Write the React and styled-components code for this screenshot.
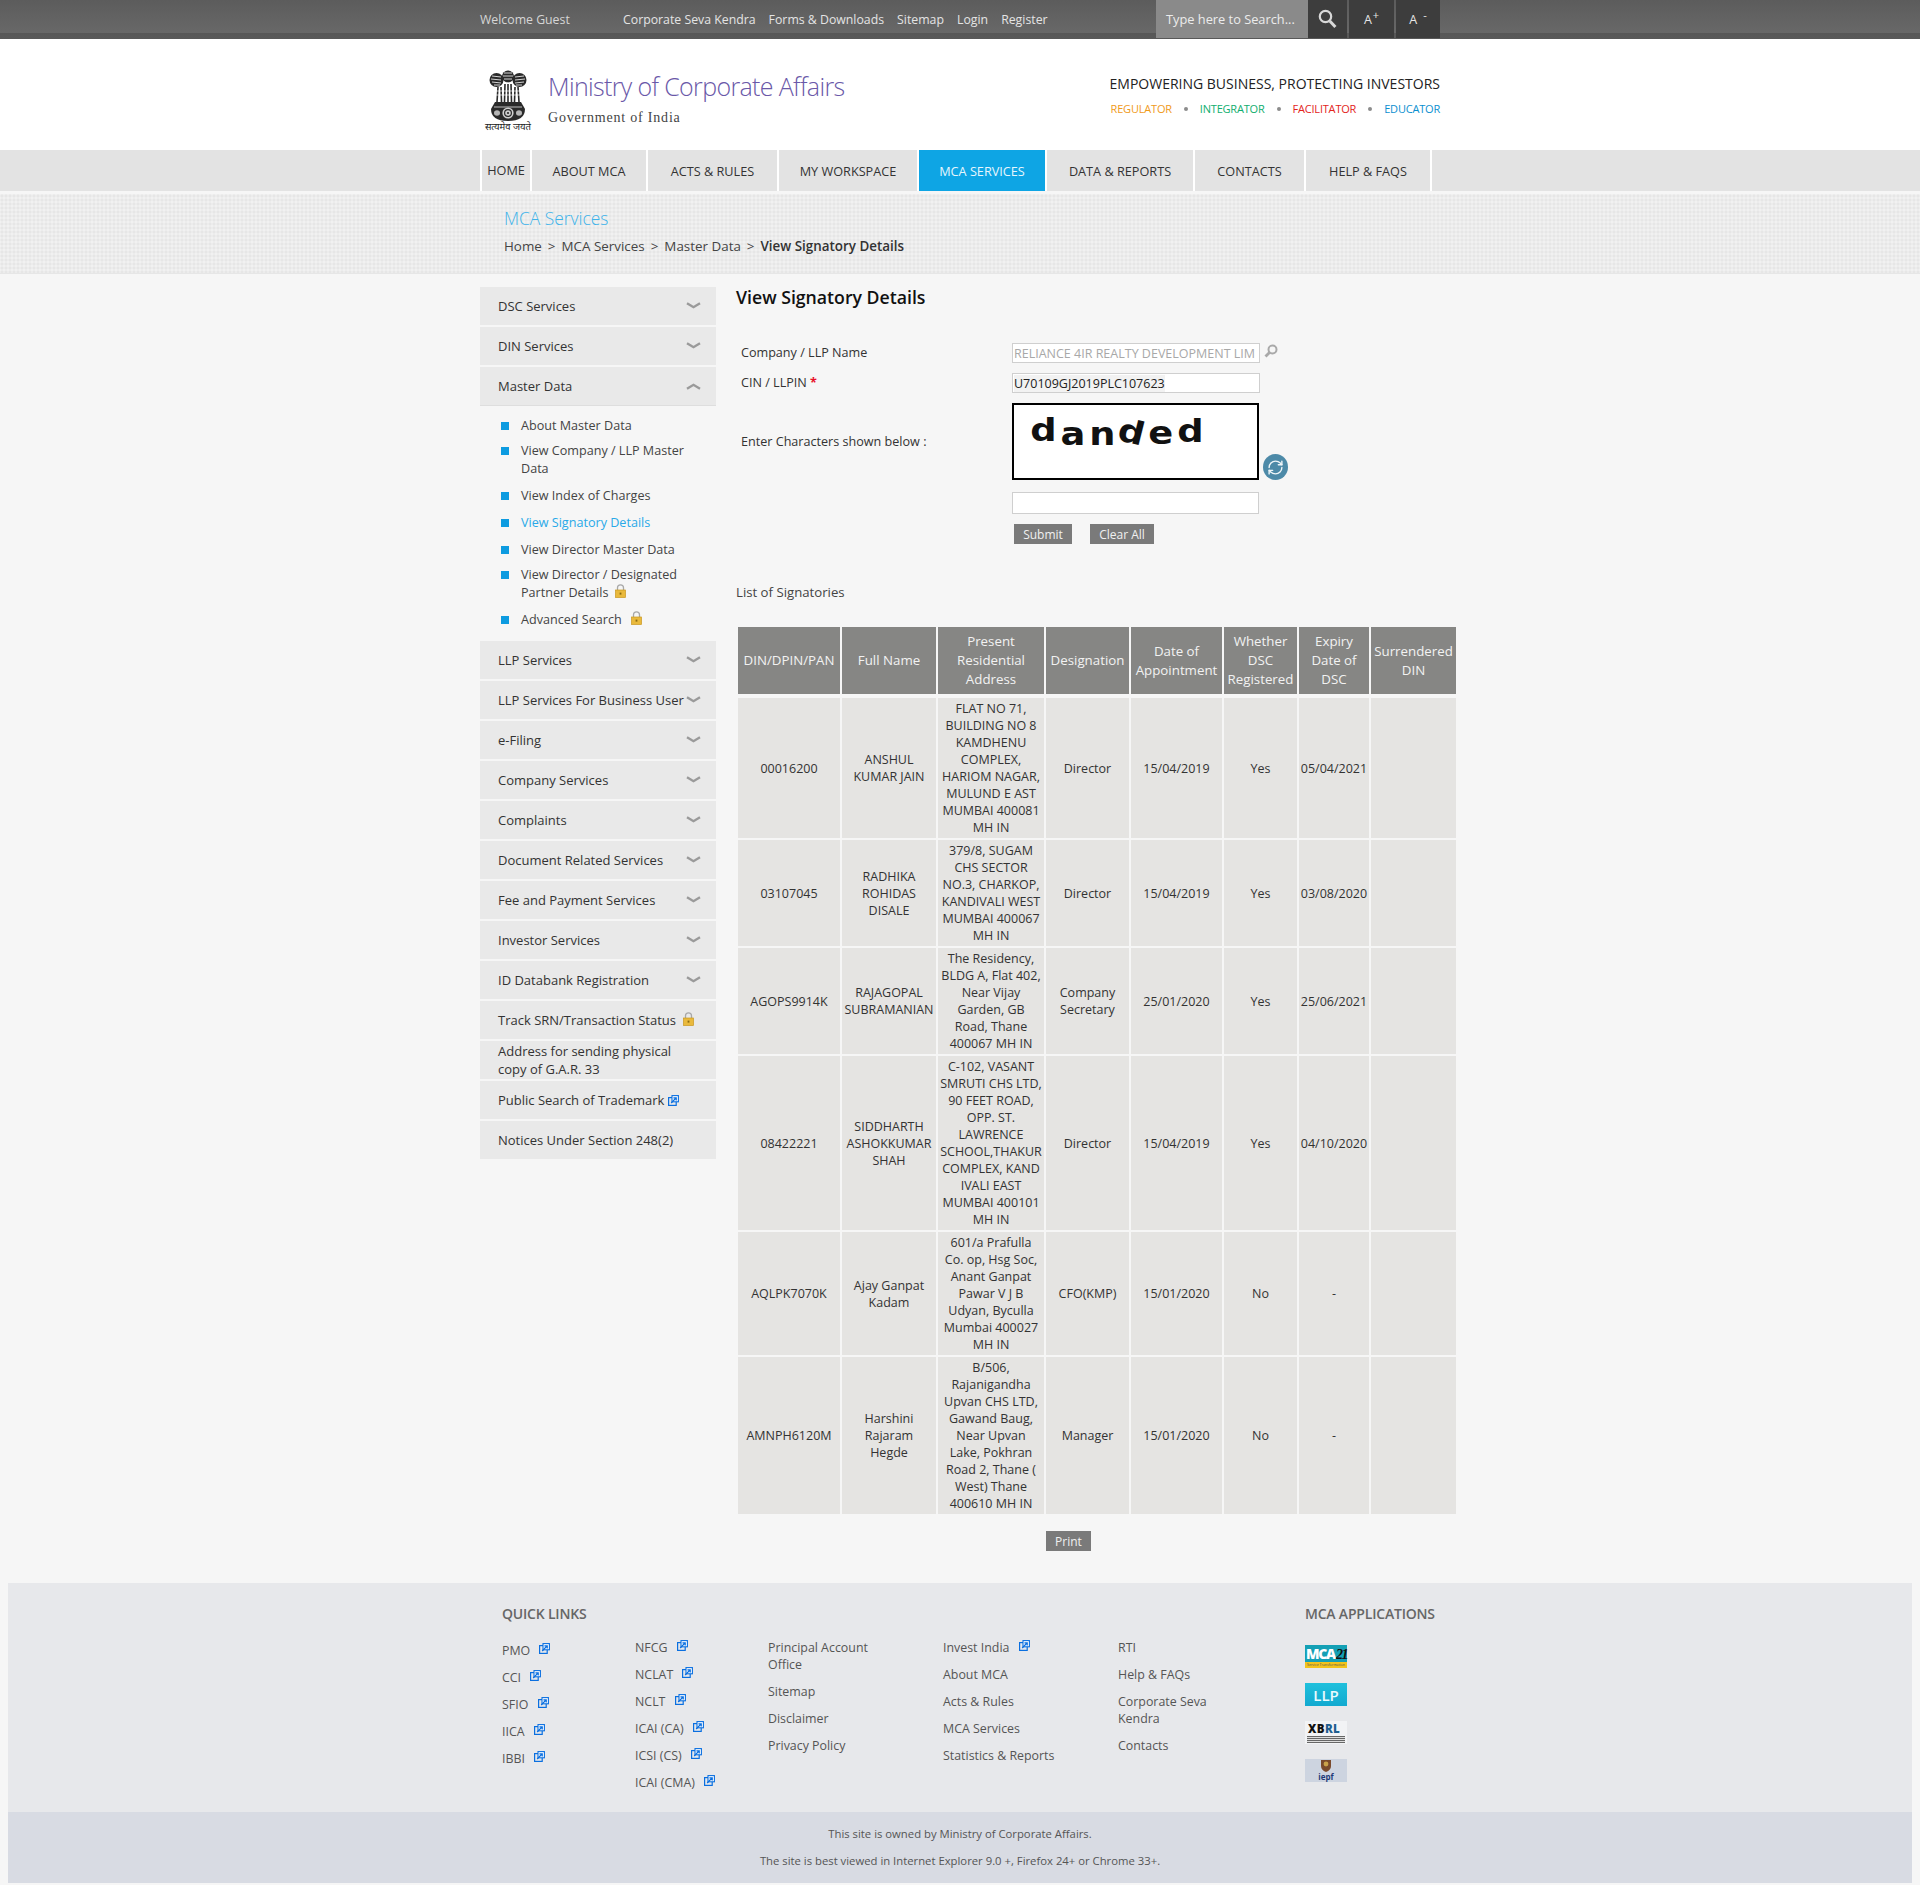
import React from "react";
import styled, { createGlobalStyle } from "styled-components";
import { RefreshCw } from "lucide-react";

const FONT = `"Open Sans", "Noto Sans", sans-serif`;

const GlobalStyle = createGlobalStyle`
  html, body {
    margin: 0;
    padding: 0;
    background: #f6f6f6;
    font-family: ${FONT};
    color: #333;
  }
  * { box-sizing: border-box; }
  ul { list-style: none; margin: 0; padding: 0; }
`;

const SIDE_TOP = ["DSC Services", "DIN Services"];
const SIDE_BOTTOM = [
  "LLP Services",
  "LLP Services For Business User",
  "e-Filing",
  "Company Services",
  "Complaints",
  "Document Related Services",
  "Fee and Payment Services",
  "Investor Services",
  "ID Databank Registration"
];
const NAV = [
  ["HOME", 48],
  ["ABOUT MCA", 114],
  ["ACTS & RULES", 129],
  ["MY WORKSPACE", 138],
  ["MCA SERVICES", 126],
  ["DATA & REPORTS", 146],
  ["CONTACTS", 109],
  ["HELP & FAQS", 124]
];
const HEADERS = [
  "DIN/DPIN/PAN",
  "Full Name",
  "Present Residential Address",
  "Designation",
  "Date of Appointment",
  "Whether DSC Registered",
  "Expiry Date of DSC",
  "Surrendered DIN"
];
const COLS = [102, 94, 106, 83, 91, 73, 70, 85];
const ROWS = [
  {
    din: "00016200",
    name: ["ANSHUL", "KUMAR JAIN"],
    address: ["FLAT NO 71,", "BUILDING NO 8", "KAMDHENU", "COMPLEX,", "HARIOM NAGAR,", "MULUND E AST", "MUMBAI 400081", "MH IN"],
    role: ["Director"],
    date: "15/04/2019",
    dsc: "Yes",
    expiry: "05/04/2021"
  },
  {
    din: "03107045",
    name: ["RADHIKA", "ROHIDAS", "DISALE"],
    address: ["379/8, SUGAM", "CHS SECTOR", "NO.3, CHARKOP,", "KANDIVALI WEST", "MUMBAI 400067", "MH IN"],
    role: ["Director"],
    date: "15/04/2019",
    dsc: "Yes",
    expiry: "03/08/2020"
  },
  {
    din: "AGOPS9914K",
    name: ["RAJAGOPAL", "SUBRAMANIAN"],
    address: ["The Residency,", "BLDG A, Flat 402,", "Near Vijay", "Garden, GB", "Road, Thane", "400067 MH IN"],
    role: ["Company", "Secretary"],
    date: "25/01/2020",
    dsc: "Yes",
    expiry: "25/06/2021"
  },
  {
    din: "08422221",
    name: ["SIDDHARTH", "ASHOKKUMAR", "SHAH"],
    address: ["C-102, VASANT", "SMRUTI CHS LTD,", "90 FEET ROAD,", "OPP. ST.", "LAWRENCE", "SCHOOL,THAKUR", "COMPLEX, KAND", "IVALI EAST", "MUMBAI 400101", "MH IN"],
    role: ["Director"],
    date: "15/04/2019",
    dsc: "Yes",
    expiry: "04/10/2020"
  },
  {
    din: "AQLPK7070K",
    name: ["Ajay Ganpat", "Kadam"],
    address: ["601/a Prafulla", "Co. op, Hsg Soc,", "Anant Ganpat", "Pawar V J B", "Udyan, Byculla", "Mumbai 400027", "MH IN"],
    role: ["CFO(KMP)"],
    date: "15/01/2020",
    dsc: "No",
    expiry: "-"
  },
  {
    din: "AMNPH6120M",
    name: ["Harshini", "Rajaram", "Hegde"],
    address: ["B/506,", "Rajanigandha", "Upvan CHS LTD,", "Gawand Baug,", "Near Upvan", "Lake, Pokhran", "Road 2, Thane (", "West) Thane", "400610 MH IN"],
    role: ["Manager"],
    date: "15/01/2020",
    dsc: "No",
    expiry: "-"
  }
];

const Lines = ({ items }) =>
  items.map((line, i) => (
    <React.Fragment key={i}>
      {i > 0 && <br />}
      {line}
    </React.Fragment>
  ));

const Chevron = ({ up }) => (
  <ChevronSvg viewBox="0 0 15 8" $up={up}>
    <path d="M1 1.2 L7.5 5.2 L14 1.2" fill="none" stroke="#9a9a9a" strokeWidth="2.4" />
  </ChevronSvg>
);

const Lock = () => (
  <IconSvg width="11" height="14" viewBox="0 0 11 14">
    <path d="M2.5 6.5 V3.8 a3 3 0 0 1 6 0 V6.5" fill="none" stroke="#a8a8a8" strokeWidth="1.3" />
    <rect x="0.5" y="6" width="10" height="7.5" fill="#e9b93c" stroke="#c9981f" strokeWidth="0.7" />
    <rect x="4.6" y="8.6" width="1.8" height="2" fill="#8a6a10" />
  </IconSvg>
);

const External = () => (
  <IconSvg width="11" height="11" viewBox="0 0 11 11">
    <rect x="0.6" y="2.6" width="7.6" height="7.8" fill="none" stroke="#0a6fe0" strokeWidth="1.2" />
    <rect x="4" y="0.6" width="6.4" height="6.2" fill="#fff" stroke="#0a6fe0" strokeWidth="1.1" />
    <path d="M3.2 8 L7.6 3.4 M5.4 2.8 H8.2 V5.6" fill="none" stroke="#0a6fe0" strokeWidth="1.3" />
  </IconSvg>
);

// rough drawing of the state emblem, lacy on purpose
const Emblem = () => (
  <svg width="38" height="52" viewBox="0 0 38 52">
    <ellipse cx="19" cy="6.5" rx="6" ry="6" fill="#2a2a2a" />
    <ellipse cx="7.5" cy="10" rx="7" ry="7" fill="#2a2a2a" />
    <ellipse cx="30.5" cy="10" rx="7" ry="7" fill="#2a2a2a" />
    <path
      d="M15 3 l8 0 M14 6 l10 0 M15 9 l8 0 M3 6 l9 1 M2 9 l10 1 M3 12 l9 1 M5 15 l6 0 M26 7 l9 -1 M26 10 l10 -1 M26 13 l9 -1 M27 15 l6 0"
      stroke="#fff"
      strokeWidth="0.8"
    />
    <path d="M15 12 v4 M19 12 v4 M23 12 v4" stroke="#fff" strokeWidth="0.7" />
    <path d="M9 17 L8 32 M12 17 L12.5 32 M16 14 L15.5 32 M19 14 V32 M22 14 L22.5 32 M26 17 L25.5 32 M29 17 L30 32" stroke="#2a2a2a" strokeWidth="1.6" />
    <path d="M7 21 h24 M7 25 h24" stroke="#fff" strokeWidth="0.7" />
    <path d="M6 32 h26 l4 7 q0 12 -17 12 q-17 0 -17 -12 z" fill="#2a2a2a" />
    <path d="M5 37 h28" stroke="#fff" strokeWidth="0.7" />
    <circle cx="19" cy="43" r="5.6" fill="#cfcfcf" />
    <circle cx="19" cy="43" r="3.4" fill="none" stroke="#2a2a2a" strokeWidth="1.2" />
    <circle cx="19" cy="43" r="1.1" fill="#2a2a2a" />
    <ellipse cx="8" cy="43" rx="3" ry="2.8" fill="#b5b5b5" />
    <ellipse cx="30" cy="43" rx="3" ry="2.8" fill="#b5b5b5" />
  </svg>
);

const App = () => (
  <>
    <GlobalStyle />
    <TopBar>
      <TopInner>
        <Welcome>Welcome Guest</Welcome>
        <TopLinks>
          <span>Corporate Seva Kendra</span>
          <span>Forms &amp; Downloads</span>
          <span>Sitemap</span>
          <span>Login</span>
          <span>Register</span>
        </TopLinks>
        <SearchBox>Type here to Search...</SearchBox>
        <DarkButton $w={39} $first>
          <svg width="19" height="20" viewBox="0 0 19 20">
            <circle cx="7.5" cy="7.5" r="5.7" fill="none" stroke="#d8d8d8" strokeWidth="2.2" />
            <path d="M11.8 12 L17.4 18" stroke="#d8d8d8" strokeWidth="3" />
          </svg>
        </DarkButton>
        <DarkButton $w={45}>
          A<sup>+</sup>
        </DarkButton>
        <DarkButton $w={44} $gap={6}>
          A<sup>-</sup>
        </DarkButton>
      </TopInner>
    </TopBar>

    <HeaderBand>
      <Header>
        <Brand>
          <EmblemWrap>
            <Emblem />
            <Motto>सत्यमेव जयते</Motto>
          </EmblemWrap>
          <div>
            <BrandTitle>Ministry of Corporate Affairs</BrandTitle>
            <BrandSub>Government of India</BrandSub>
          </div>
        </Brand>
        <Tagline>
          <TagHead>EMPOWERING BUSINESS, PROTECTING INVESTORS</TagHead>
          <TagRow>
            <TagWord $c="#f09a1a">REGULATOR</TagWord>
            <TagDot />
            <TagWord $c="#0fae6e">INTEGRATOR</TagWord>
            <TagDot />
            <TagWord $c="#e3241b">FACILITATOR</TagWord>
            <TagDot />
            <TagWord $c="#0b8fd0">EDUCATOR</TagWord>
          </TagRow>
        </Tagline>
      </Header>
    </HeaderBand>

    <NavBand>
      <NavInner>
        {NAV.map(([label, w]) => (
          <NavItem key={label} $w={w} $active={label === "MCA SERVICES"} $home={label === "HOME"}>
            {label}
          </NavItem>
        ))}
      </NavInner>
    </NavBand>

    <Banner>
      <BannerInner>
        <BannerTitle>MCA Services</BannerTitle>
        <Crumbs>
          Home<CrumbSep>&gt;</CrumbSep>MCA Services<CrumbSep>&gt;</CrumbSep>Master Data<CrumbSep>&gt;</CrumbSep>
          <b>View Signatory Details</b>
        </Crumbs>
      </BannerInner>
    </Banner>

    <Content>
      <Sidebar>
        {SIDE_TOP.map(s => (
          <SideItem key={s}>
            {s}
            <Chevron />
          </SideItem>
        ))}
        <SideItem $open>
          Master Data
          <Chevron up />
        </SideItem>
        <SubMenu>
          <SubItem>About Master Data</SubItem>
          <SubItem $pull>View Company / LLP Master Data</SubItem>
          <SubItem>View Index of Charges</SubItem>
          <SubItem $active>View Signatory Details</SubItem>
          <SubItem>View Director Master Data</SubItem>
          <SubItem $pull>
            View Director / Designated Partner Details&nbsp; <Lock />
          </SubItem>
          <SubItem>
            Advanced Search &nbsp;&nbsp;
            <Lock />
          </SubItem>
        </SubMenu>
        {SIDE_BOTTOM.map(s => (
          <SideItem key={s}>
            {s}
            <Chevron />
          </SideItem>
        ))}
        <SideItem>
          <span>
            Track SRN/Transaction Status&nbsp; <Lock />
          </span>
        </SideItem>
        <SideItem $tight>Address for sending physical copy of G.A.R. 33</SideItem>
        <SideItem>
          <span>
            Public Search of Trademark <External />
          </span>
        </SideItem>
        <SideItem>Notices Under Section 248(2)</SideItem>
      </Sidebar>

      <Main>
        <PageTitle>View Signatory Details</PageTitle>
        <FormRow $h={20} $top={35}>
          <FormLabel>Company / LLP Name</FormLabel>
          <TextBox $muted>RELIANCE 4IR REALTY DEVELOPMENT LIM</TextBox>
          <LookupIcon viewBox="0 0 14 14">
            <circle cx="8.5" cy="5.5" r="4" fill="none" stroke="#a9a9a9" strokeWidth="2" />
            <path d="M5.5 8.5 L1.5 12.5" stroke="#a9a9a9" strokeWidth="2.8" />
          </LookupIcon>
        </FormRow>
        <FormRow $h={20} $top={10}>
          <FormLabel>
            CIN / LLPIN <Required>*</Required>
          </FormLabel>
          <TextBox>
            <Filled>U70109GJ2019PLC107623</Filled>
          </TextBox>
        </FormRow>
        <FormRow $h={78} $top={9}>
          <FormLabel $shift={0}>Enter Characters shown below :</FormLabel>
          <Captcha>
            <CaptchaLetter>d</CaptchaLetter>
            <CaptchaLetter $y={4}>a</CaptchaLetter>
            <CaptchaLetter $y={4}>n</CaptchaLetter>
            <CaptchaLetter $y={2} $r={14}>d</CaptchaLetter>
            <CaptchaLetter $y={3}>e</CaptchaLetter>
            <CaptchaLetter $y={1}>d</CaptchaLetter>
          </Captcha>
          <RefreshBadge>
            <RefreshCw size={17} color="#eef5f8" strokeWidth={2} />
          </RefreshBadge>
        </FormRow>
        <FormRow $h={22} $top={12}>
          <FormLabel />
          <TextBox $w={247} />
        </FormRow>
        <Buttons>
          <GreyButton $w={58}>Submit</GreyButton>
          <GreyButton $w={64}>Clear All</GreyButton>
        </Buttons>
        <ListTitle>List of Signatories</ListTitle>
        <Table>
          <colgroup>
            {COLS.map((w, i) => (
              <col key={i} width={w} />
            ))}
          </colgroup>
          <thead>
            <tr>
              {HEADERS.map(h => (
                <HeadCell key={h}>{h}</HeadCell>
              ))}
            </tr>
          </thead>
          <tbody>
            {ROWS.map(r => (
              <tr key={r.din}>
                <Cell>{r.din}</Cell>
                <Cell>
                  <Lines items={r.name} />
                </Cell>
                <Cell>
                  <Lines items={r.address} />
                </Cell>
                <Cell>
                  <Lines items={r.role} />
                </Cell>
                <Cell>{r.date}</Cell>
                <Cell>{r.dsc}</Cell>
                <Cell>{r.expiry}</Cell>
                <Cell />
              </tr>
            ))}
          </tbody>
        </Table>
        <PrintRow>
          <GreyButton $w={45}>Print</GreyButton>
        </PrintRow>
      </Main>
    </Content>

    <FooterWrap>
      <FooterTop>
        <QuickLinks>
          <FooterHead>QUICK LINKS</FooterHead>
          <FooterCols>
            <FooterCol $w={133} $top={3}>
              <FootLink>PMO <External /></FootLink>
              <FootLink>CCI <External /></FootLink>
              <FootLink>SFIO <External /></FootLink>
              <FootLink>IICA <External /></FootLink>
              <FootLink>IBBI <External /></FootLink>
            </FooterCol>
            <FooterCol $w={133}>
              <FootLink>NFCG <External /></FootLink>
              <FootLink>NCLAT <External /></FootLink>
              <FootLink>NCLT <External /></FootLink>
              <FootLink>ICAI (CA) <External /></FootLink>
              <FootLink>ICSI (CS) <External /></FootLink>
              <FootLink>ICAI (CMA) <External /></FootLink>
            </FooterCol>
            <FooterCol $w={175} $wrap={112}>
              <FootLink>Principal Account Office</FootLink>
              <FootLink>Sitemap</FootLink>
              <FootLink>Disclaimer</FootLink>
              <FootLink>Privacy Policy</FootLink>
            </FooterCol>
            <FooterCol $w={175}>
              <FootLink>Invest India <External /></FootLink>
              <FootLink>About MCA</FootLink>
              <FootLink>Acts &amp; Rules</FootLink>
              <FootLink>MCA Services</FootLink>
              <FootLink>Statistics &amp; Reports</FootLink>
            </FooterCol>
            <FooterCol $w={187} $wrap={110}>
              <FootLink>RTI</FootLink>
              <FootLink>Help &amp; FAQs</FootLink>
              <FootLink>Corporate Seva Kendra</FootLink>
              <FootLink>Contacts</FootLink>
            </FooterCol>
          </FooterCols>
        </QuickLinks>
        <Applications>
          <FooterHead>MCA APPLICATIONS</FooterHead>
          <AppLogos>
            <LogoMca>
              <McaWord>
                MCA<i>21</i>
              </McaWord>
              <McaStrip>Service Transformation</McaStrip>
            </LogoMca>
            <LogoLlp>LLP</LogoLlp>
            <LogoXbrl>
              <XbrlWord>
                XB<em>RL</em>
              </XbrlWord>
              <XbrlStripes />
            </LogoXbrl>
            <LogoIepf>
              <svg width="12" height="13" viewBox="0 0 12 13">
                <path d="M1 1 h10 v6 q0 4 -5 6 q-5 -2 -5 -6 z" fill="#7a4a2c" />
                <circle cx="6" cy="5" r="2.4" fill="#c9a24a" />
              </svg>
              <span>iepf</span>
            </LogoIepf>
          </AppLogos>
        </Applications>
      </FooterTop>
      <FooterBottom>
        <p>This site is owned by Ministry of Corporate Affairs.</p>
        <p>The site is best viewed in Internet Explorer 9.0 +, Firefox 24+ or Chrome 33+.</p>
      </FooterBottom>
    </FooterWrap>
  </>
);

const TopBar = styled.div`
  height: 39px;
  background: linear-gradient(#5c5c5c, #686868 85%, #575757 85%, #595959);
`;

const TopInner = styled.div`
  width: 960px;
  margin: 0 auto;
  height: 38px;
  display: flex;
  align-items: center;
  color: #e4e4e4;
  font-size: 12.3px;
`;

const Welcome = styled.span`
  width: 143px;
  color: #d6d6d6;
`;

const TopLinks = styled.div`
  display: flex;
  gap: 13px;
  flex: 1;
`;

const SearchBox = styled.div`
  width: 152px;
  height: 38px;
  padding: 0 0 0 10px;
  display: flex;
  align-items: center;
  background: #8a8a8a;
  color: #ececec;
  font-size: 12.8px;
  white-space: nowrap;
`;

const DarkButton = styled.div`
  width: ${p => p.$w}px;
  height: 38px;
  margin-left: ${p => (p.$first ? 0 : 2)}px;
  display: flex;
  align-items: center;
  justify-content: center;
  background: #3d3d3d;
  color: #e6e6e6;
  font-size: 12.5px;
  sup {
    font-size: 11px;
    line-height: 1;
    margin-bottom: 9px;
    margin-left: ${p => p.$gap || 1}px;
  }
`;

const HeaderBand = styled.div`
  background: #fff;
`;

const Header = styled.div`
  width: 960px;
  height: 111px;
  margin: 0 auto;
  display: flex;
  justify-content: space-between;
`;

const Brand = styled.div`
  display: flex;
  padding: 31px 0 0 4px;
`;

const EmblemWrap = styled.div`
  width: 48px;
  margin-right: 16px;
  display: flex;
  flex-direction: column;
  align-items: center;
`;

const Motto = styled.span`
  font-family: "Noto Sans", "DejaVu Sans", sans-serif;
  font-size: 9.5px;
  line-height: 10px;
  white-space: nowrap;
  color: #222;
`;

const BrandTitle = styled.div`
  color: #6a58a8;
  font-size: 25px;
  font-weight: 300;
  line-height: 32px;
  letter-spacing: -0.65px;
  white-space: nowrap;
`;

const BrandSub = styled.div`
  margin-top: 7px;
  font-family: "Liberation Serif", serif;
  font-size: 14px;
  font-weight: 400;
  line-height: 18px;
  letter-spacing: 0.8px;
  color: #444;
`;

const Tagline = styled.div`
  padding-top: 37px;
  text-align: right;
`;

const TagHead = styled.div`
  font-size: 14px;
  line-height: 16px;
  color: #222;
`;

const TagRow = styled.div`
  margin-top: 10px;
  display: flex;
  align-items: center;
  justify-content: flex-end;
  gap: 12px;
`;

const TagWord = styled.span`
  font-size: 11px;
  line-height: 14px;
  letter-spacing: -0.2px;
  color: ${p => p.$c};
`;

const TagDot = styled.i`
  width: 4px;
  height: 4px;
  border-radius: 50%;
  background: #8c8c8c;
`;

const NavBand = styled.div`
  height: 41px;
  background: #e3e3e3;
`;

const NavInner = styled.div`
  width: 960px;
  height: 41px;
  margin: 0 auto;
  display: flex;
`;

const NavItem = styled.div`
  width: ${p => p.$w + 2}px;
  height: 41px;
  padding-top: ${p => (p.$home ? 0 : 1)}px;
  padding-bottom: ${p => (p.$home ? 1 : 0)}px;
  border-left: 2px solid #fff;
  display: flex;
  align-items: center;
  justify-content: center;
  background: ${p => (p.$active ? "#0ea5e4" : "transparent")};
  background-clip: padding-box;
  color: ${p => (p.$active ? "#e6f6fd" : "#333")};
  font-size: 12.7px;
  white-space: nowrap;
  &:last-child {
    width: ${p => p.$w + 4}px;
    border-right: 2px solid #fff;
  }
`;

const Banner = styled.div`
  height: 80px;
  margin-top: 3px;
  border-bottom: 1px solid #e6e6e6;
  background-color: #ececec;
  background-image:
    radial-gradient(#e6e6e6 1px, transparent 1px),
    radial-gradient(#f1f1f1 1px, transparent 1px);
  background-size: 4px 4px;
  background-position: 0 0, 2px 2px;
`;

const BannerInner = styled.div`
  width: 960px;
  margin: 0 auto;
  padding: 13px 0 0 24px;
`;

const BannerTitle = styled.div`
  color: #3db3ea;
  font-size: 17.4px;
  font-weight: 300;
  line-height: 23px;
`;

const Crumbs = styled.div`
  margin-top: 7px;
  font-size: 13.4px;
  line-height: 18px;
  color: #444;
  b {
    font-weight: 600;
    color: #333;
  }
`;

const CrumbSep = styled.span`
  margin: 0 6px;
`;

const Content = styled.div`
  width: 978px;
  margin-left: calc(50% - 480px);
  padding-top: 13px;
  display: flex;
  align-items: flex-start;
  gap: 20px;
`;

const Sidebar = styled.div`
  width: 236px;
  flex: none;
  display: flex;
  flex-direction: column;
  gap: 2px;
`;

const SideItem = styled.div`
  height: ${p => (p.$open ? 39 : 38)}px;
  padding: ${p => (p.$tight ? "0 28px 0 18px" : "0 15px 0 18px")};
  display: flex;
  align-items: center;
  justify-content: space-between;
  background: #e9e9e9;
  border-bottom: ${p => (p.$open ? "1px solid #dedede" : 0)};
  font-size: 13px;
  line-height: 18px;
  color: #333;
  white-space: ${p => (p.$tight ? "normal" : "nowrap")};
`;

const ChevronSvg = styled.svg`
  width: 15px;
  height: 8px;
  flex: none;
  transform: ${p => (p.$up ? "rotate(180deg)" : "none")};
`;

const IconSvg = styled.svg`
  vertical-align: -1px;
`;

const SubMenu = styled.ul`
  padding: 9px 20px 10px 21px;
`;

const SubItem = styled.li`
  position: relative;
  padding-left: 20px;
  margin-top: ${p => (p.$pull ? -2 : 0)}px;
  margin-bottom: 9px;
  font-size: 12.6px;
  line-height: 18px;
  color: ${p => (p.$active ? "#29a9e8" : "#444")};
  &::before {
    content: "";
    position: absolute;
    left: 0;
    top: 5px;
    width: 8px;
    height: 8px;
    background: #0d9be0;
  }
  &:last-child {
    margin-bottom: 0;
  }
`;

const Main = styled.div`
  width: 722px;
  flex: none;
`;

const PageTitle = styled.h1`
  margin: -1px 0 0;
  font-size: 17.7px;
  font-weight: 600;
  line-height: 22px;
  color: #111;
`;

const FormRow = styled.div`
  height: ${p => p.$h}px;
  margin-top: ${p => p.$top}px;
  padding-left: 5px;
  display: flex;
  align-items: center;
`;

const FormLabel = styled.div`
  width: 271px;
  flex: none;
  font-size: 12.6px;
  color: #333;
  transform: translateY(${p => p.$shift ?? -1}px);
`;

const Required = styled.span`
  color: #e8102a;
  font-weight: 700;
`;

const TextBox = styled.div`
  width: ${p => p.$w || 248}px;
  height: 100%;
  padding-left: 1px;
  display: flex;
  align-items: center;
  background: #fff;
  border: 1px solid #cfcfcf;
  font-size: 12.5px;
  white-space: nowrap;
  overflow: hidden;
  color: ${p => (p.$muted ? "#a8a8a8" : "#222")};
`;

const Filled = styled.span`
  background: #f2f2f2;
`;

const LookupIcon = styled.svg`
  width: 14px;
  height: 14px;
  margin: -5px 0 0 4px;
`;

const Captcha = styled.div`
  width: 247px;
  height: 77px;
  padding: 7px 0 0 18px;
  display: flex;
  align-items: flex-start;
  gap: 7px;
  background: #fff;
  border: 2px solid #000;
`;

const CaptchaLetter = styled.span`
  font-family: "DejaVu Sans", sans-serif;
  font-weight: 700;
  font-size: 32px;
  line-height: 36px;
  color: #111;
  transform: translateY(${p => p.$y || 0}px) rotate(${p => p.$r || 0}deg) scaleX(1.15);
`;

const RefreshBadge = styled.div`
  width: 25px;
  height: 26px;
  margin: 52px 0 0 4px;
  border-radius: 50%;
  display: flex;
  align-items: center;
  justify-content: center;
  background: #4d8aa8;
`;

const Buttons = styled.div`
  margin: 10px 0 0 278px;
  display: flex;
  gap: 18px;
`;

const GreyButton = styled.div`
  width: ${p => p.$w}px;
  height: 20px;
  display: flex;
  align-items: center;
  justify-content: center;
  background: #7a7a7a;
  color: #f0f0f0;
  font-size: 12px;
`;

const ListTitle = styled.div`
  margin-top: 39px;
  font-size: 13.2px;
  line-height: 18px;
  color: #444;
`;

const Table = styled.table`
  width: 722px;
  margin-top: 24px;
  table-layout: fixed;
  border-collapse: separate;
  border-spacing: 2px;
`;

const HeadCell = styled.th`
  height: 69px;
  padding: 0 2px;
  border-bottom: 2px solid #f6f6f6;
  background: #868684;
  background-clip: padding-box;
  color: #f2f2f2;
  font-size: 13.3px;
  font-weight: 400;
  line-height: 19px;
  text-align: center;
`;

const Cell = styled.td`
  padding: 2px 0;
  background: #e5e4e2;
  color: #333;
  font-size: 12.5px;
  line-height: 17px;
  text-align: center;
  vertical-align: middle;
  white-space: nowrap;
`;

const PrintRow = styled.div`
  margin: 15px 0 32px;
  padding-left: 310px;
`;

const FooterWrap = styled.div`
  padding: 0 8px;
`;

const FooterTop = styled.div`
  height: 229px;
  padding: 22px 0 0 494px;
  display: flex;
  background: #e7e8eb;
`;

const QuickLinks = styled.div`
  width: 803px;
`;

const Applications = styled.div`
  flex: 1;
`;

const FooterHead = styled.div`
  font-size: 14px;
  font-weight: 600;
  line-height: 17px;
  color: #666;
  letter-spacing: -0.2px;
  white-space: nowrap;
`;

const FooterCols = styled.div`
  margin-top: 17px;
  display: flex;
`;

const FooterCol = styled.ul`
  width: ${p => p.$w}px;
  margin-top: ${p => p.$top || 0}px;
  padding-right: ${p => (p.$wrap ? p.$w - p.$wrap : 0)}px;
`;

const FootLink = styled.li`
  margin-bottom: 10px;
  font-size: 12.4px;
  line-height: 17px;
  color: #555;
  svg {
    margin-left: 6px;
    vertical-align: 1px;
  }
`;

const AppLogos = styled.div`
  margin-top: 23px;
  display: flex;
  flex-direction: column;
  gap: 15px;
`;

const LogoBox = styled.div`
  width: 42px;
  height: 23px;
`;

const LogoMca = styled(LogoBox)`
  display: flex;
  flex-direction: column;
  background: #14a0b5;
`;

const McaWord = styled.div`
  height: 17px;
  padding-left: 1px;
  font-size: 14px;
  font-weight: 800;
  line-height: 17px;
  letter-spacing: -1.3px;
  color: #fff;
  white-space: nowrap;
  i {
    margin-left: 1px;
    font-family: "Liberation Serif", serif;
    color: #111;
  }
`;

const McaStrip = styled.div`
  height: 6px;
  background: #f3c31c;
  font-size: 3.5px;
  line-height: 6px;
  color: #555;
  white-space: nowrap;
  text-align: center;
`;

const LogoLlp = styled(LogoBox)`
  display: flex;
  align-items: center;
  justify-content: center;
  background: linear-gradient(#1fc0dc, #12a9d0);
  color: #e9fbff;
  font-size: 15px;
  font-weight: 600;
`;

const LogoXbrl = styled(LogoBox)`
  background: #f2f3f5;
`;

const XbrlWord = styled.div`
  height: 15px;
  padding-left: 3px;
  font-size: 11.5px;
  font-weight: 800;
  line-height: 15px;
  letter-spacing: 0.4px;
  color: #111;
  white-space: nowrap;
  em {
    font-style: normal;
    color: #1f5f8f;
  }
`;

const XbrlStripes = styled.div`
  height: 7px;
  margin: 0 2px;
  background: repeating-linear-gradient(#666 0 1px, #ddd 1px 2px);
`;

const LogoIepf = styled(LogoBox)`
  display: flex;
  flex-direction: column;
  align-items: center;
  background: #cdd4e0;
  color: #1d3a78;
  font-size: 8px;
  font-weight: 700;
  line-height: 10px;
`;

const FooterBottom = styled.div`
  height: 71px;
  padding-top: 14px;
  background: #d8dbe3;
  text-align: center;
  font-size: 11.3px;
  line-height: 16px;
  color: #555;
  p {
    margin: 0 0 11px;
  }
`;

export default App;
